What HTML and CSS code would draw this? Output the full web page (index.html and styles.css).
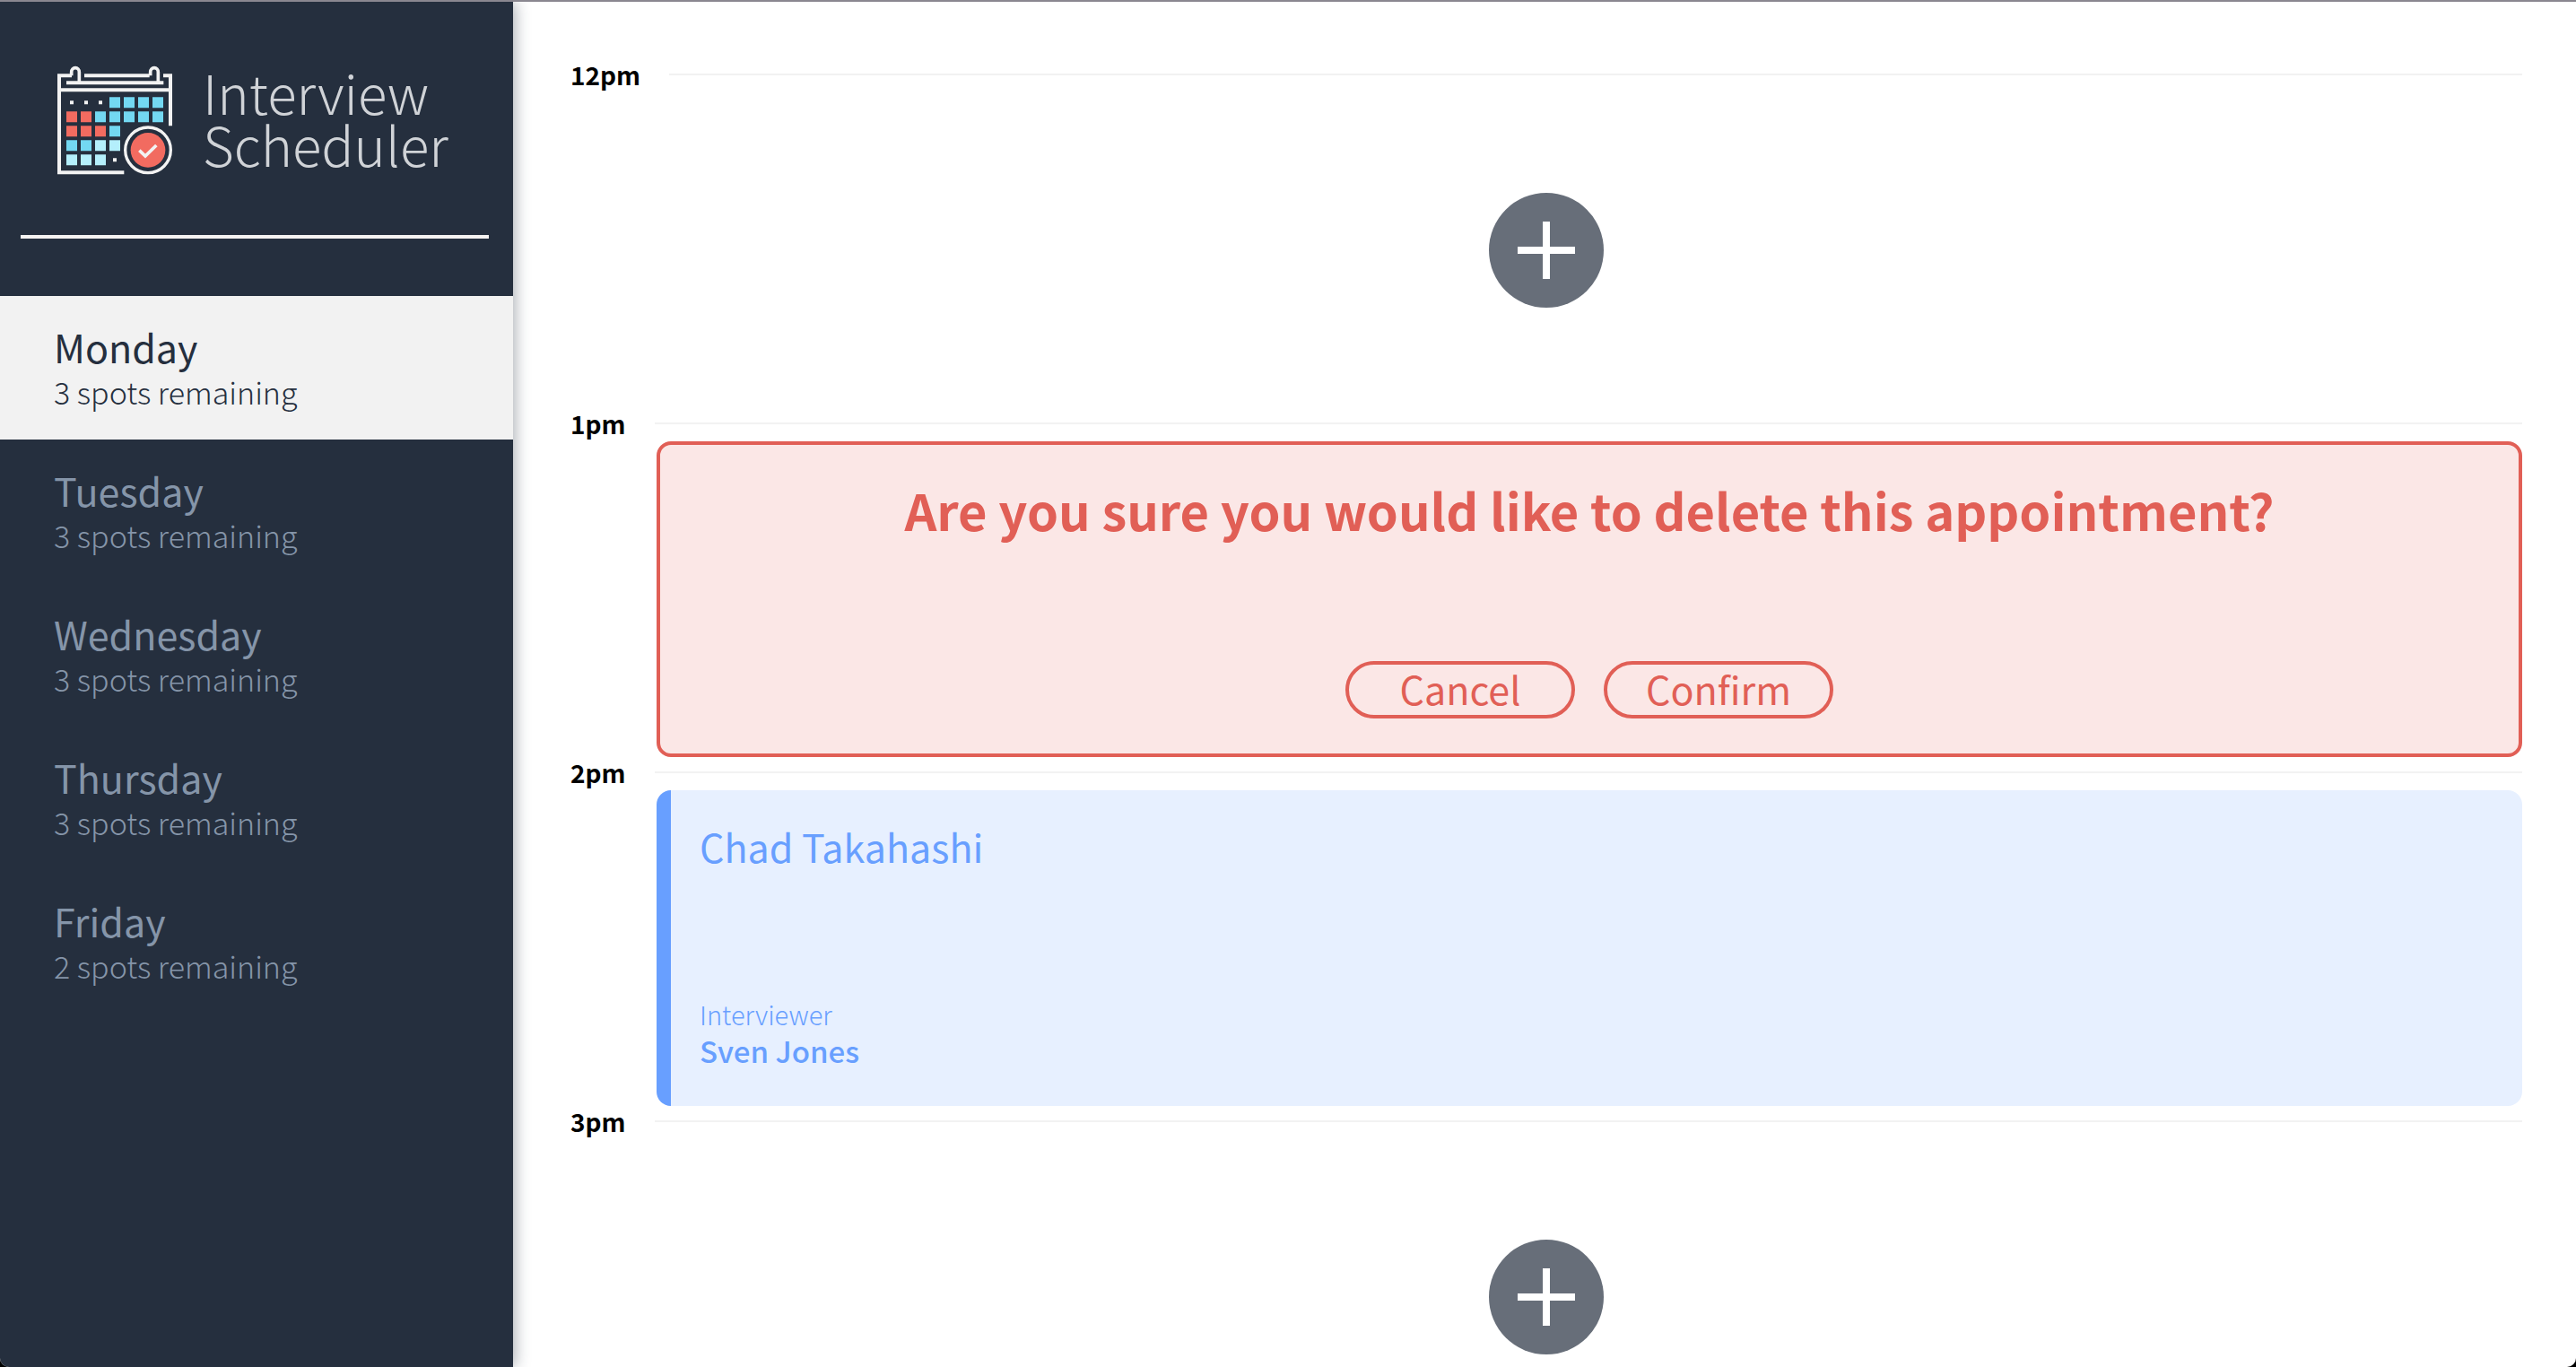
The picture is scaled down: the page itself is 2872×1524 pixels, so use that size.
FILE: index.html
```html
<!DOCTYPE html>
<html lang="en">
<head>
  <meta charset="utf-8">
  <meta name="viewport" content="width=device-width, initial-scale=1">
  <title>Interview Scheduler</title>
  <link rel="stylesheet" href="styles.css">
</head>
<body>
  <div class="layout">
    <aside class="sidebar">
      <div class="logo">
        <svg class="logo__icon" viewBox="72 38 384 366" aria-hidden="true">
          <g fill="none" stroke="#f2f2f2" stroke-width="12">
            <path d="M120 72H78V396H295M162 72H380M426 72H450V240M102 96H427M78 120H450"/>
            <path d="M119 72V60a13 14 0 0 1 26 0V96M383 72V60a13 14 0 0 1 26 0V96" stroke-width="11"/>
            <circle cx="375" cy="321" r="76" stroke-width="10"/>
          </g>
          <g fill="#f2f2f2">
            <path d="M114 156h12v12h-12zM162 156h12v12h-12zM210 156h12v12h-12zM258 348h12v12h-12z"/>
          </g>
          <path fill="#73d8f2" d="M246 144h36v36h-36zM294 144h36v36h-36zM342 144h36v36h-36zM390 144h36v36h-36zM198 192h36v36h-36zM246 192h36v36h-36zM294 192h36v36h-36zM342 192h36v36h-36zM390 192h36v36h-36zM246 240h36v36h-36zM102 288h36v36h-36zM150 288h36v36h-36z"/>
          <path fill="#f26b60" d="M102 192h36v36h-36zM150 192h36v36h-36zM102 240h36v36h-36zM150 240h36v36h-36zM198 240h36v36h-36z"/>
          <path fill="#b4effc" d="M198 288h36v36h-36zM246 288h36v36h-36zM102 336h36v36h-36zM150 336h36v36h-36zM198 336h36v36h-36z"/>
          <circle cx="375" cy="321" r="58" fill="#f26b60"/>
          <path d="M346 322L366 341L403 305" fill="none" stroke="#f2f2f2" stroke-width="11"/>
        </svg>
        <h1 class="logo__text">Interview<br>Scheduler</h1>
      </div>
      <hr class="sidebar__separator">
      <nav>
        <ul class="days">
          <li><button class="day day--selected" type="button"><span class="day__name">Monday</span><span class="day__spots">3 spots remaining</span></button></li>
          <li><button class="day" type="button"><span class="day__name">Tuesday</span><span class="day__spots">3 spots remaining</span></button></li>
          <li><button class="day" type="button"><span class="day__name">Wednesday</span><span class="day__spots">3 spots remaining</span></button></li>
          <li><button class="day" type="button"><span class="day__name">Thursday</span><span class="day__spots">3 spots remaining</span></button></li>
          <li><button class="day" type="button"><span class="day__name">Friday</span><span class="day__spots">2 spots remaining</span></button></li>
        </ul>
      </nav>
    </aside>

    <main class="schedule">
      <article class="appointment">
        <header class="appointment__time"><h2 class="appointment__hour">12pm</h2><hr class="appointment__line"></header>
        <div class="card card--add">
          <button class="add" type="button" aria-label="Add appointment">
            <svg class="add__icon" viewBox="0 0 128 128" aria-hidden="true"><circle cx="64" cy="64" r="64" fill="#676e79"/><path d="M64 32V96M32 64H96" stroke="#fff" stroke-width="8"/></svg>
          </button>
        </div>
      </article>

      <article class="appointment">
        <header class="appointment__time"><h2 class="appointment__hour">1pm</h2><hr class="appointment__line"></header>
        <div class="card card--confirm">
          <h3 class="card__message">Are you sure you would like to delete this appointment?</h3>
          <div class="card__actions">
            <button class="button" type="button">Cancel</button>
            <button class="button" type="button">Confirm</button>
          </div>
        </div>
      </article>

      <article class="appointment">
        <header class="appointment__time"><h2 class="appointment__hour">2pm</h2><hr class="appointment__line"></header>
        <div class="card card--show">
          <h3 class="card__student">Chad Takahashi</h3>
          <div class="card__interviewer">
            <h4 class="card__label">Interviewer</h4>
            <p class="card__name">Sven Jones</p>
          </div>
        </div>
      </article>

      <article class="appointment">
        <header class="appointment__time"><h2 class="appointment__hour">3pm</h2><hr class="appointment__line"></header>
        <div class="card card--add">
          <button class="add" type="button" aria-label="Add appointment">
            <svg class="add__icon" viewBox="0 0 128 128" aria-hidden="true"><circle cx="64" cy="64" r="64" fill="#676e79"/><path d="M64 32V96M32 64H96" stroke="#fff" stroke-width="8"/></svg>
          </button>
        </div>
      </article>
    </main>
  </div>
</body>
</html>
```
FILE: styles.css
```css
*,
*::before,
*::after {
  box-sizing: border-box;
}

html {
  background: #000;
}

body,
h1,
h2,
h3,
h4,
p,
ul {
  margin: 0;
  padding: 0;
}

body,
button {
  font-family: "Noto Sans CJK SC", "Open Sans", sans-serif;
}

button {
  border: 0;
  background: none;
  color: inherit;
  cursor: pointer;
}

.layout {
  display: flex;
  height: 100vh;
  overflow: hidden;
  border-top: 2px solid #8a8790;
  border-radius: 0 0 10px 10px;
  background: #fff;
}

/* Sidebar */

.sidebar {
  flex: none;
  width: 572px;
  background: #252f3e;
  color: #8595a9;
  box-shadow: 2px 0 16px rgba(37, 47, 62, 0.4);
}

.logo {
  display: flex;
  gap: 34px;
  padding: 71px 0 67px 64px;
}

.logo__icon {
  width: 128px;
  height: 122px;
}

.logo__text {
  color: #d0d3d7;
  font-size: 60px;
  font-weight: 300;
  line-height: 58px;
}

.sidebar__separator {
  height: 4px;
  margin: 0 27px 64px 23px;
  border: 0;
  background: #f5f3f2;
}

.days {
  list-style: none;
}

.day {
  display: flex;
  flex-direction: column;
  width: 100%;
  padding: 28px 60px 30px;
  text-align: left;
}

.day--selected {
  background: #f2f2f2;
  color: #252f3e;
}

.day__name {
  font-size: 43px;
  font-weight: 400;
  line-height: 56px;
}

.day__spots {
  font-size: 34px;
  font-weight: 300;
  line-height: 46px;
}

/* Schedule */

.schedule {
  flex: 1;
  min-width: 0;
  padding: 64px 60px 64px 64px;
  overflow-y: auto;
  scrollbar-width: none;
}

.appointment__time {
  display: flex;
  align-items: center;
  gap: 32px;
  margin-bottom: 3px;
}

.appointment__hour {
  color: #000;
  font-size: 28px;
  font-weight: 700;
  line-height: 34px;
}

.appointment__line {
  flex: 1;
  height: 2px;
  margin: 0;
  border: 0;
  background: #f2f2f2;
}

.card {
  display: flex;
  flex-direction: column;
  height: 352px;
  border-radius: 16px;
}

.card--add {
  align-items: center;
  justify-content: center;
}

.card--confirm {
  align-items: center;
  justify-content: space-between;
  margin-left: 96px;
  padding: 36px 32px 39px;
  border: 4px solid #e15f56;
  background: #fbe7e6;
  color: #e15f56;
}

.card--show {
  justify-content: space-between;
  margin-left: 96px;
  padding: 34px 32px 39px;
  border-left: 16px solid #689fff;
  background: #e7f0ff;
  color: #689fff;
}

.add {
  padding: 0;
}

.add__icon {
  display: block;
  width: 128px;
  height: 128px;
}

.card__message {
  font-size: 56px;
  font-weight: 700;
  line-height: 72px;
}

.card__actions {
  display: flex;
  gap: 32px;
}

.button {
  width: 256px;
  height: 64px;
  padding: 0 0 4px;
  border: 4px solid #e15f56;
  border-radius: 32px;
  font-size: 43px;
  line-height: 52px;
}

.card__student {
  font-size: 43px;
  font-weight: 400;
  line-height: 56px;
}

.card__label {
  font-size: 29px;
  font-weight: 300;
  line-height: 36px;
}

.card__name {
  font-size: 33px;
  font-weight: 500;
  line-height: 46px;
}
```
